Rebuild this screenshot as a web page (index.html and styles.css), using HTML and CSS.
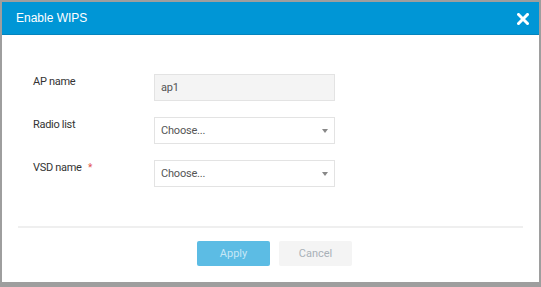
FILE: index.html
```html
<!DOCTYPE html>
<html>
    <head>
        <meta charset="UTF-8" />
        <title>Enable WIPS</title>
        <link rel="stylesheet" href="styles.css">
    </head>
    <body>
        <div class="dialog">
            <div class="dialog-header">
                <span class="dialog-title">Enable WIPS</span>
                <svg class="dialog-close" width="12" height="12" viewBox="0 0 12 12">
                    <path d="M1.5 1.5 L10.5 10.5 M10.5 1.5 L1.5 10.5" stroke="#fff" stroke-width="3" stroke-linecap="square" fill="none" />
                </svg>
            </div>
            <div class="dialog-body">
                <div class="form-row">
                    <label class="form-label">AP name</label>
                    <div class="form-field readonly">ap1</div>
                </div>
                <div class="form-row">
                    <label class="form-label">Radio list</label>
                    <div class="form-field select">
                        <span>Choose...</span>
                        <span class="caret"></span>
                    </div>
                </div>
                <div class="form-row">
                    <label class="form-label">VSD name <span class="required">*</span></label>
                    <div class="form-field select">
                        <span>Choose...</span>
                        <span class="caret"></span>
                    </div>
                </div>
            </div>
            <div class="dialog-footer">
                <button class="btn btn-apply">Apply</button>
                <button class="btn btn-cancel">Cancel</button>
            </div>
        </div>
    </body>
</html>
```

FILE: styles.css
```css
body {
    margin: 0;
    background: #9e9e9e;
    font-family: Roboto, "Noto Sans", sans-serif;
    height: 287px;
    overflow: hidden;
}

.dialog {
    margin: 2px 2px 0 2px;
    height: 280px;
    background: #fff;
    display: flex;
    flex-direction: column;
}

.dialog-header {
    height: 32px;
    background: #0096d6;
    border-bottom: 1px solid #0484bd;
    display: flex;
    align-items: center;
    justify-content: space-between;
    padding: 0 10px 0 14px;
}

.dialog-title {
    font-family: "Liberation Sans", Arial, sans-serif;
    color: #fff;
    font-size: 12px;
}

.dialog-close {
    display: block;
    margin-top: 1px;
}

.dialog-body {
    padding: 39px 0 0 31px;
    display: flex;
    flex-direction: column;
    gap: 16px;
    flex: 1;
}

.form-row {
    display: flex;
    align-items: flex-start;
}

.form-label {
    width: 121px;
    font-size: 11px;
    letter-spacing: -0.3px;
    color: #333;
    padding-top: 1px;
}

.required {
    color: #e2534b;
    margin-left: 4px;
    font-size: 10px;
}

.form-field {
    height: 25px;
    border: 1px solid #e3e3e3;
    font-size: 11px;
    letter-spacing: -0.2px;
    color: #555;
    display: flex;
    align-items: center;
    justify-content: space-between;
    padding: 0 6px;
    box-sizing: content-box;
    width: 167px;
}

.readonly {
    background: #f4f4f4;
}

.caret {
    width: 0;
    height: 0;
    border-left: 3px solid transparent;
    border-right: 3px solid transparent;
    border-top: 4px solid #888;
}

.dialog-footer {
    margin: 0 16px;
    border-top: 2px solid #efefef;
    height: 56px;
    display: flex;
    justify-content: center;
    align-items: flex-start;
    gap: 9px;
    padding: 13px 0 0 8px;
    box-sizing: border-box;
}

.btn {
    width: 73px;
    height: 25px;
    border: none;
    border-radius: 2px;
    font-family: Roboto, "Noto Sans", sans-serif;
    font-size: 11px;
}

.btn-apply {
    background: #5cbce4;
    color: #c6e7f6;
}

.btn-cancel {
    background: #f4f4f4;
    color: #a9b1b8;
}
```
